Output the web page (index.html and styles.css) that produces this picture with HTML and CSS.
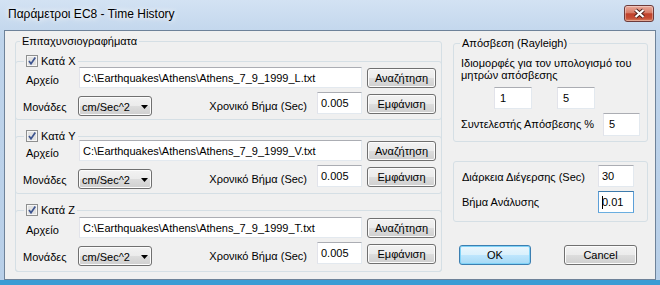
FILE: index.html
```html
<!DOCTYPE html>
<html lang="el">
  <head>
    <meta charset="UTF-8" />
    <meta name="viewport" content="width=device-width, initial-scale=1.0" />
    <title>Παράμετροι EC8 - Time History</title>
    <link rel="stylesheet" href="styles.css">
  </head>
  <body>
    <div class="window">
      <div class="titlebar">
        <span class="title">Παράμετροι EC8 - Time History</span>
        <button class="close">
          <svg width="13" height="11" viewBox="0 0 13 11">
            <path d="M2.5 2 L10.5 9 M10.5 2 L2.5 9" stroke="#4a1e18" stroke-width="4" />
            <path d="M2.5 2 L10.5 9 M10.5 2 L2.5 9" stroke="#fff" stroke-width="2.2" />
          </svg>
        </button>
      </div>

      <div class="client">
        <fieldset class="accel">
          <legend>Επιταχυνσιογραφήματα</legend>

          <fieldset class="axis axis-x">
            <legend>
              <span class="chkwrap">
                <svg class="chk" viewBox="0 0 12 12">
                  <rect x="0.5" y="0.5" width="11" height="11" fill="#f6f6f6" stroke="#8e8f8f" />
                  <rect x="2" y="2" width="8" height="8" fill="#e2e2e2" />
                  <path d="M3 6 L5 8.7 L9.3 2.6" fill="none" stroke="#3e5590" stroke-width="1.7" />
                </svg>Κατά X
              </span>
            </legend>
            <div class="row row-file">
              <label class="lbl-file">Αρχείο</label>
              <div class="edit edit-file">C:\Earthquakes\Athens\Athens_7_9_1999_L.txt</div>
              <button class="btn">Αναζήτηση</button>
            </div>
            <div class="row row-units">
              <label class="lbl-units">Μονάδες</label>
              <div class="combo">
                <span>cm/Sec^2</span>
                <svg class="arrow" width="7" height="4" viewBox="0 0 7 4"><path d="M0 0H7L3.5 4Z" /></svg>
              </div>
              <label class="lbl-step">Χρονικό Βήμα (Sec)</label>
              <div class="edit edit-step">0.005</div>
              <button class="btn">Εμφάνιση</button>
            </div>
          </fieldset>

          <fieldset class="axis axis-y">
            <legend>
              <span class="chkwrap">
                <svg class="chk" viewBox="0 0 12 12">
                  <rect x="0.5" y="0.5" width="11" height="11" fill="#f6f6f6" stroke="#8e8f8f" />
                  <rect x="2" y="2" width="8" height="8" fill="#e2e2e2" />
                  <path d="M3 6 L5 8.7 L9.3 2.6" fill="none" stroke="#3e5590" stroke-width="1.7" />
                </svg>Κατά Y
              </span>
            </legend>
            <div class="row row-file">
              <label class="lbl-file">Αρχείο</label>
              <div class="edit edit-file">C:\Earthquakes\Athens\Athens_7_9_1999_V.txt</div>
              <button class="btn">Αναζήτηση</button>
            </div>
            <div class="row row-units">
              <label class="lbl-units">Μονάδες</label>
              <div class="combo">
                <span>cm/Sec^2</span>
                <svg class="arrow" width="7" height="4" viewBox="0 0 7 4"><path d="M0 0H7L3.5 4Z" /></svg>
              </div>
              <label class="lbl-step">Χρονικό Βήμα (Sec)</label>
              <div class="edit edit-step">0.005</div>
              <button class="btn">Εμφάνιση</button>
            </div>
          </fieldset>

          <fieldset class="axis axis-z">
            <legend>
              <span class="chkwrap">
                <svg class="chk" viewBox="0 0 12 12">
                  <rect x="0.5" y="0.5" width="11" height="11" fill="#f6f6f6" stroke="#8e8f8f" />
                  <rect x="2" y="2" width="8" height="8" fill="#e2e2e2" />
                  <path d="M3 6 L5 8.7 L9.3 2.6" fill="none" stroke="#3e5590" stroke-width="1.7" />
                </svg>Κατά Z
              </span>
            </legend>
            <div class="row row-file">
              <label class="lbl-file">Αρχείο</label>
              <div class="edit edit-file">C:\Earthquakes\Athens\Athens_7_9_1999_T.txt</div>
              <button class="btn">Αναζήτηση</button>
            </div>
            <div class="row row-units">
              <label class="lbl-units">Μονάδες</label>
              <div class="combo">
                <span>cm/Sec^2</span>
                <svg class="arrow" width="7" height="4" viewBox="0 0 7 4"><path d="M0 0H7L3.5 4Z" /></svg>
              </div>
              <label class="lbl-step">Χρονικό Βήμα (Sec)</label>
              <div class="edit edit-step">0.005</div>
              <button class="btn">Εμφάνιση</button>
            </div>
          </fieldset>
        </fieldset>

        <div class="side">
          <fieldset class="grp damping">
            <legend>Απόσβεση (Rayleigh)</legend>
            <p class="note">Ιδιομορφές για τον υπολογισμό του<br />μητρών απόσβεσης</p>
            <div class="modes">
              <div class="edit edit-small">1</div>
              <div class="edit edit-small">5</div>
            </div>
            <div class="srow damp-row">
              <label>Συντελεστής Απόσβεσης %</label>
              <div class="edit edit-small">5</div>
            </div>
          </fieldset>

          <div class="grp duration">
            <div class="srow dur-row">
              <label>Διάρκεια Διέγερσης (Sec)</label>
              <div class="edit edit-dur">30</div>
            </div>
            <div class="srow dur-row">
              <label>Βήμα Ανάλυσης</label>
              <div class="edit edit-dur focus"><span class="caret"></span>0.01</div>
            </div>
          </div>

          <div class="actions">
            <button class="btn btn-ok">OK</button>
            <button class="btn btn-cancel">Cancel</button>
          </div>
        </div>
      </div>
    </div>
  </body>
</html>
```

FILE: styles.css
```css
* {
  box-sizing: border-box;
  margin: 0;
  padding: 0;
}
body {
  width: 660px;
  height: 285px;
  overflow: hidden;
  background: #3a9cd4;
  font-family: "Liberation Sans", Arial, sans-serif;
  font-size: 11px;
  color: #000;
}
.window {
  height: 280px;
  padding: 0 4px;
  background: linear-gradient(#d3e2f3, #bfd4eb 40px, #b8cfe8);
  display: flex;
  flex-direction: column;
}

/* title bar */
.titlebar {
  height: 30px;
  flex: none;
  display: flex;
  align-items: flex-start;
}
.title {
  margin: 7px 0 0 4px;
  font-size: 12px;
  line-height: 14px;
  text-shadow: 0 0 5px #fff, 0 0 8px rgba(255, 255, 255, 0.8);
}
.close {
  margin: 5px 2px 0 auto;
  width: 30px;
  height: 17px;
  border: 1px solid #6c3b3b;
  border-radius: 3px;
  background: linear-gradient(#eaaa9b, #d77c68 45%, #c0412b 52%, #c54c34 80%, #d9805f);
  box-shadow: inset 0 0 0 1px rgba(255, 255, 255, 0.35);
  display: flex;
  align-items: center;
  justify-content: center;
}

/* dialog area */
.client {
  flex: 1;
  background: #f0f0f0;
  border: 1px solid #6e8299;
  display: flex;
  align-items: flex-start;
}
fieldset,
.grp {
  min-width: 0;
  border: 1px solid #d5dfe5;
  border-radius: 3px;
}
legend {
  padding: 0 2px;
  line-height: 13px;
}
.accel {
  margin: 4px 0 0 10px;
  width: 427px;
}
.accel > legend {
  margin-left: 4px;
}
.axis {
  margin: 0 -1px;
}
.axis > legend {
  margin-left: 8px;
}
.chkwrap {
  display: flex;
  align-items: center;
  height: 12px;
}
.chk {
  width: 12px;
  height: 12px;
  margin-right: 3px;
}
.axis-x {
  margin-top: 7px;
  padding-bottom: 4px;
}
.axis-y {
  margin-top: 10px;
  padding-bottom: 5px;
}
.axis-y .row-file {
  margin-top: -2px;
}
.axis-z {
  margin-top: 10px;
  margin-bottom: -1px;
  padding-bottom: 6px;
}
.axis-z .row-file {
  margin-top: 1px;
}

.row {
  display: flex;
  align-items: flex-start;
  padding-right: 5px;
}
.row-file {
  height: 21px;
}
.row-units {
  height: 23px;
  margin-top: 4px;
}
.lbl-file {
  width: 53px;
  margin: 7px 0 0 10px;
  line-height: 13px;
}
.lbl-units {
  width: 55px;
  margin: 9px 0 0 7px;
  line-height: 13px;
}
.lbl-step {
  margin: 8px 10px 0 auto;
  line-height: 13px;
}

/* controls */
.edit {
  background: #fff;
  border: 1px solid;
  border-color: #abadb3 #e3e9ef #e3e9ef #e2e3ea;
  padding: 4px 3px 0;
  line-height: 13px;
  white-space: nowrap;
  overflow: hidden;
}
.edit-file {
  width: 283px;
  height: 21px;
}
.edit-step {
  width: 45px;
  height: 22px;
}
.btn {
  width: 69px;
  height: 20px;
  margin-left: 5px;
  border: 1px solid #707070;
  border-radius: 3px;
  background: linear-gradient(#f2f2f2, #ebebeb 50%, #dddddd 50%, #cfcfcf);
  box-shadow: inset 0 0 0 1px #fcfcfc;
  font: inherit;
  line-height: 16px;
  color: #000;
}
.row-file .btn {
  margin-top: 1px;
}
.row-units .btn {
  margin-top: 2px;
}
.combo {
  width: 74px;
  height: 20px;
  margin-top: 4px;
  padding: 4px 0 0 3px;
  border: 1px solid #707070;
  border-radius: 3px;
  background: linear-gradient(#f2f2f2, #ebebeb 50%, #dddddd 50%, #cfcfcf);
  box-shadow: inset 0 0 0 1px #fcfcfc;
  display: flex;
  align-items: flex-start;
  line-height: 13px;
}
.arrow {
  margin: 4px 3px 0 auto;
}

/* right column */
.side {
  width: 195px;
  margin: 6px 0 0 11px;
}
.damping {
  padding-bottom: 5px;
}
.damping > legend {
  margin-left: 6px;
}
.note {
  margin: 7px 0 0 7px;
  line-height: 12px;
  white-space: nowrap;
}
.modes {
  display: flex;
  gap: 25px;
  margin: 6px 0 0 40px;
}
.edit-small {
  width: 38px;
  height: 22px;
  padding: 4px 5px 0;
}
.srow {
  display: flex;
  align-items: flex-start;
}
.damp-row {
  height: 23px;
  margin-top: 4px;
}
.damp-row label {
  margin: 5px 0 0 7px;
  line-height: 13px;
}
.damp-row .edit {
  width: 37px;
  height: 23px;
  margin: 0 7px 0 auto;
}
.duration {
  margin-top: 19px;
  padding: 3px 0 8px;
}
.dur-row {
  height: 22px;
}
.dur-row + .dur-row {
  margin-top: 4px;
}
.dur-row label {
  margin: 6px 0 0 8px;
  line-height: 13px;
}
.dur-row + .dur-row label {
  margin-top: 5px;
}
.edit-dur {
  width: 36px;
  height: 22px;
  margin: 0 13px 0 auto;
}
.focus {
  border-color: #3d7bad #5c9fd8 #6aaee0 #5c9fd8;
}
.caret {
  display: inline-block;
  width: 1px;
  height: 13px;
  margin-right: -1px;
  background: #000;
  vertical-align: top;
}
.actions {
  display: flex;
  margin-top: 23px;
}
.btn-ok {
  width: 72px;
  margin-left: 6px;
  border-color: #3c7fb1;
  background: linear-gradient(#eaf6fd, #d9f0fc 50%, #bee6fd 50%, #a7d9f5);
  box-shadow: inset 0 0 0 1px #7fd2f7;
}
.btn-cancel {
  width: 73px;
  margin-left: 33px;
}
```
